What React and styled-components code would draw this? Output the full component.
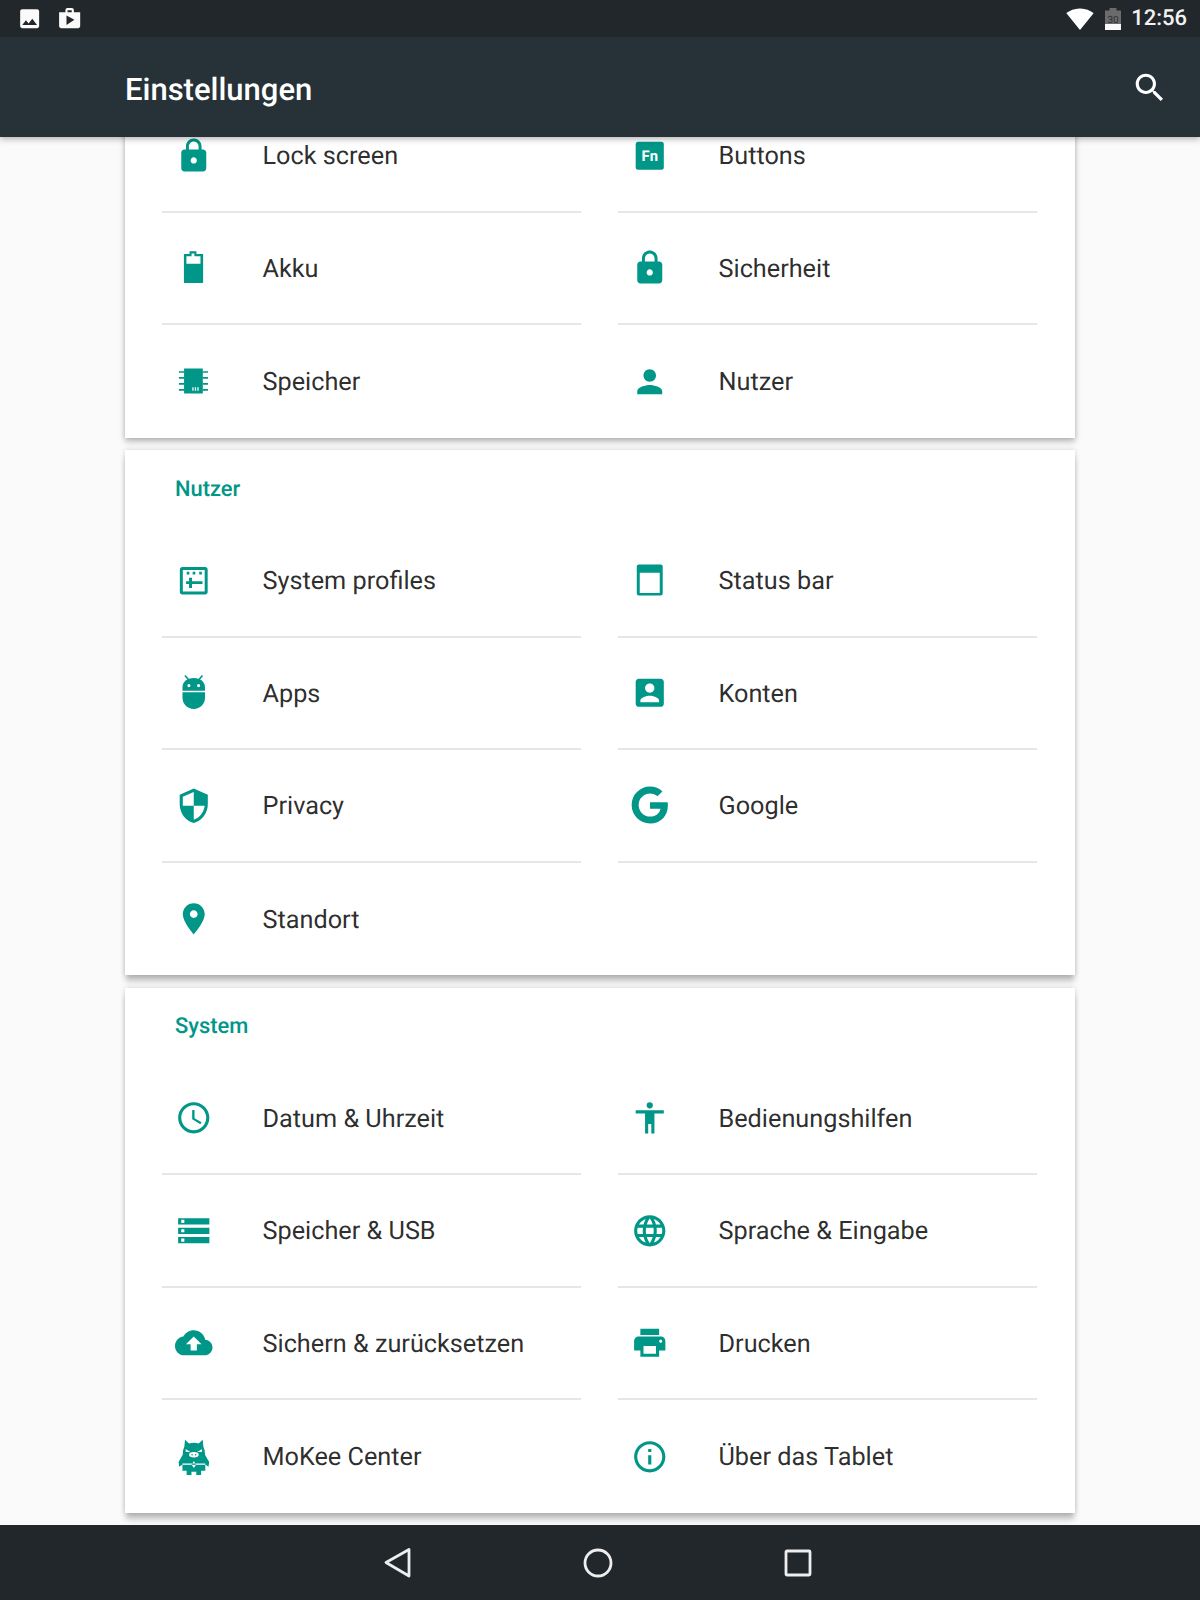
import React from 'react';
import styled, { createGlobalStyle } from 'styled-components';
import { FaGoogle } from 'react-icons/fa';

const Global = createGlobalStyle`
  html, body { margin: 0; padding: 0; background: #fafafa; }
  * { box-sizing: border-box; }
`;

const Screen = styled.div`
  width: 1200px;
  height: 1600px;
  display: flex;
  flex-direction: column;
  overflow: hidden;
  font-family: Roboto, "Noto Sans", sans-serif;
  text-rendering: geometricPrecision;
  background: #fafafa;
`;

const StatusBar = styled.div`
  height: 37px;
  flex: none;
  background: #21272b;
  display: flex;
  align-items: center;
  justify-content: space-between;
  padding: 0 13px 0 17px;
  position: relative;
  z-index: 3;
`;
const StatusGroup = styled.div`
  display: flex;
  align-items: center;
  gap: ${p => p.$gap}px;
`;
const Clock = styled.span`
  color: #f2f2f2;
  font-size: 22px;
  font-weight: 500;
  line-height: 37px;
`;
const BatteryText = styled.text`
  font-family: Roboto, sans-serif;
  font-size: 10px;
  fill: #2b2f33;
`;

const AppBar = styled.header`
  height: 100px;
  flex: none;
  background: #263238;
  display: flex;
  align-items: center;
  justify-content: space-between;
  padding: 4px 32px 0 125px;
  box-shadow: 0 2px 6px rgba(0, 0, 0, 0.3);
  position: relative;
  z-index: 2;
`;
const Title = styled.h1`
  margin: 0;
  color: #fff;
  font-size: 31px;
  font-weight: 500;
`;
const SearchButton = styled.span`
  display: flex;
  margin-top: -2px;
`;

const Scroll = styled.main`
  flex: 1;
  min-height: 0;
  overflow: hidden;
  padding: 0 125px;
  display: flex;
  flex-direction: column;
  gap: 12.5px;
`;
const Card = styled.section`
  flex: none;
  background: #fff;
  padding: 0 37px;
  margin-top: ${p => p.$offset || 0}px;
  box-shadow: ${p => p.$deep
    ? '0 7px 6px -1px rgba(0,0,0,.24), 0 0 5px rgba(0,0,0,.16)'
    : '0 4px 6px rgba(0,0,0,.22), 0 0 5px rgba(0,0,0,.16)'};
`;
const CardHead = styled.h2`
  margin: 0 0 0 13px;
  height: 75px;
  padding-top: 3px;
  display: flex;
  align-items: center;
  font-size: 21.9px;
  font-weight: 500;
  color: #009688;
`;
const Grid = styled.div`
  display: grid;
  grid-template-columns: 419px 419px;
  column-gap: 37px;
`;
const Row = styled.div`
  height: 112.5px;
  display: flex;
  align-items: center;
  padding-left: 13px;
  border-bottom: ${p => (p.$last ? 'none' : '2px solid #e6e6e6')};
`;
const IconBox = styled.span`
  width: 37.5px;
  height: 37.5px;
  flex: none;
  display: flex;
  align-items: center;
  justify-content: center;
  color: #009688;
`;
const Label = styled.span`
  margin-left: 50px;
  padding-top: 3px;
  font-size: 25.25px;
  color: rgba(0, 0, 0, 0.84);
`;
const FnText = styled.text`
  font-family: Roboto, sans-serif;
  font-size: 9.5px;
  font-weight: 700;
  fill: #fff;
`;

const NavBar = styled.nav`
  height: 75px;
  flex: none;
  background: #21272b;
  display: flex;
  align-items: center;
  justify-content: center;
  padding-right: 4px;
  position: relative;
  z-index: 2;
`;
const NavSlot = styled.span`
  width: 200px;
  display: flex;
  justify-content: center;
`;

const Svg = ({ size = 37.5, fill = 'currentColor', children, view = '0 0 24 24' }) => (
  <svg width={size} height={size} viewBox={view} fill={fill} fillRule="evenodd">{children}</svg>
);

const P = ({ d }) => <path d={d} />;

const LOCK = 'M18 8h-1V6c0-2.76-2.24-5-5-5S7 3.24 7 6v2H6c-1.1 0-2 .9-2 2v10c0 1.1.9 2 2 2h12c1.1 0 2-.9 2-2V10c0-1.1-.9-2-2-2zm-6 9c-1.1 0-2-.9-2-2s.9-2 2-2 2 .9 2 2-.9 2-2 2zm3.1-9H8.9V6c0-1.71 1.39-3.1 3.1-3.1 1.71 0 3.1 1.39 3.1 3.1v2z';

const icons = {
  lock: <P d={LOCK} />,
  fn: (
    <>
      <rect x="3" y="3" width="18" height="18" rx="1.6" />
      <FnText x="12" y="15.4" textAnchor="middle">Fn</FnText>
    </>
  ),
  battery: (
    <g transform="translate(-.5 0)">
      <path d="M6.2 3.2h3.6V1.4h4.400v1.800h4.100c.1 0 .2.1.2.2V21.400c0 .2-.1.3-.3.3H6.500c-.2 0-.3-.1-.3-.3V3.400c0-.1.1-.2.2-.2zM7.800 9.400h9V4.700h-3.900V2.900h-1.800v1.800H7.800z" />
    </g>
  ),
  memory: (
    <g transform="translate(-.5 0)">
      <path d="M6.300 3.800c0-.2.1-.3.3-.3H18c.2 0 .3.1.3.3v15.400c0 .2-.1.3-.3.3H6.600c-.2 0-.3-.1-.3-.3zM11.600 15.500v2.300h.8v-2.300zM13.200 15.500v2.300h.8v-2.300zM14.800 15.500v2.300h.8v-2.300z" />
      <path d="M3 5.200h3.400v1.100H3zM3 9h3.400v1.100H3zM3 12.800h3.400v1.100H3zM3 16.600h3.400v1.100H3zM18.200 5.200h3.400v1.100h-3.400zM18.200 9h3.400v1.100h-3.400zM18.200 12.800h3.400v1.100h-3.400zM18.200 16.600h3.400v1.100h-3.400z" />
    </g>
  ),
  person: <P d="M12 12c2.210 0 4-1.790 4-4s-1.790-4-4-4-4 1.790-4 4 1.790 4 4 4zm0 2c-2.670 0-8 1.340-8 4v2h16v-2c0-2.660-5.330-4-8-4z" />,
  profiles: (
    <>
      <path d="M4.700 3.200h14.600c.9 0 1.600.7 1.600 1.600v14.400c0 .9-.7 1.600-1.600 1.600H4.700c-.9 0-1.600-.7-1.600-1.600V4.800c0-.9.7-1.600 1.600-1.600zm.3 1.900v13.800h14V5.100z" />
      <path d="M9 10h1.900v2.300h6.700v1.800h-6.700v2.500H9v-2.500H7.100v-1.800H9zM7.500 6.300h1.700V8H7.500zM11.300 6.300H13V8h-1.700zM15.500 6.300h1.700V8h-1.700z" />
    </>
  ),
  statusbar: <P d="M5 1.600h14c.7 0 1.300.6 1.300 1.300v17.200c0 .7-.6 1.300-1.300 1.300H5c-.7 0-1.300-.6-1.300-1.300V2.900c0-.7.6-1.300 1.300-1.300zM5.600 6.900v12.900h12.800V6.900z" />,
  android: (
    <g transform="translate(-.5 0)">
      <path d="M5.300 10.700V8.500c0-3.600 3-6 7.200-6s7.200 2.400 7.200 6v2.200zM9.400 6.400a1 1 0 1 0 0 2 1 1 0 0 0 0-2zm6.200 0a1 1 0 1 0 0 2 1 1 0 0 0 0-2z" />
      <path d="M6.500 1.300l.8-.6 2.200 2.500-.8.7zM18.500 1.300l-.8-.6-2.200 2.500.8.7z" />
      <path d="M5.300 11.700h14.400v3.500c0 4-3.200 7.200-7.200 7.200s-7.200-3.200-7.200-7.200z" />
    </g>
  ),
  shield: <P d="M12 1L3 5v6c0 5.550 3.840 10.740 9 12 5.160-1.260 9-6.450 9-12V5l-9-4zm0 10.990h7c-.53 4.120-3.280 7.790-7 8.940V12H5V6.300l7-3.110v8.800z" />,
  pin: <P d="M12 2C8.130 2 5 5.130 5 9c0 5.250 7 13 7 13s7-7.750 7-13c0-3.870-3.130-7-7-7zm0 9.500c-1.380 0-2.500-1.120-2.500-2.500s1.120-2.500 2.500-2.500 2.500 1.120 2.500 2.500-1.120 2.500-2.500 2.500z" />,
  account: <P d="M3 5v14c0 1.100.89 2 2 2h14c1.100 0 2-.9 2-2V5c0-1.100-.9-2-2-2H5c-1.110 0-2 .9-2 2zm12 4c0 1.660-1.340 3-3 3s-3-1.340-3-3 1.340-3 3-3 3 1.340 3 3zm-9 8c0-2 4-3.100 6-3.100s6 1.100 6 3.100v1H6v-1z" />,
  clock: <P d="M11.990 2C6.470 2 2 6.480 2 12s4.470 10 9.990 10C17.520 22 22 17.520 22 12S17.520 2 11.990 2zM12 20c-4.420 0-8-3.580-8-8s3.580-8 8-8 8 3.580 8 8-3.580 8-8 8zm.5-13H11v6l5.250 3.150.75-1.230-4.500-2.670z" />,
  access: <P d="M12 2a2 2 0 1 1 0 4 2 2 0 0 1 0-4zm9 5.200v2h-6V22h-2v-6h-2v6H9V9.200H3v-2z" />,
  storage: <P d="M2 20h20v-4H2v4zm2-3h2v2H4v-2zM2 4v4h20V4H2zm4 3H4V5h2v2zm-4 7h20v-4H2v4zm2-3h2v2H4v-2z" />,
  globe: <P d="M11.990 2C6.470 2 2 6.480 2 12s4.470 10 9.990 10C17.520 22 22 17.520 22 12S17.520 2 11.990 2zm6.930 6h-2.950c-.32-1.250-.78-2.450-1.380-3.560 1.840.63 3.370 1.910 4.330 3.560zM12 4.040c.83 1.200 1.480 2.530 1.910 3.960h-3.820c.43-1.430 1.080-2.760 1.910-3.960zM4.260 14C4.100 13.360 4 12.690 4 12s.1-1.360.26-2h3.380c-.08.66-.14 1.320-.14 2 0 .68.06 1.340.14 2H4.260zm.82 2h2.950c.32 1.250.78 2.450 1.380 3.560-1.840-.63-3.370-1.900-4.330-3.560zm2.950-8H5.080c.96-1.660 2.490-2.930 4.330-3.560C8.810 5.550 8.350 6.750 8.030 8zM12 19.960c-.83-1.200-1.480-2.530-1.910-3.960h3.820c-.43 1.430-1.080 2.760-1.910 3.960zM14.340 14H9.660c-.09-.66-.16-1.320-.16-2 0-.68.07-1.350.16-2h4.680c.09.65.16 1.320.16 2 0 .68-.07 1.340-.16 2zm.25 5.560c.6-1.110 1.060-2.310 1.380-3.560h2.950c-.96 1.650-2.490 2.930-4.330 3.560zM16.360 14c.08-.66.14-1.320.14-2 0-.68-.06-1.340-.14-2h3.380c.16.64.26 1.310.26 2s-.1 1.360-.26 2h-3.380z" />,
  cloud: <P d="M19.350 10.040C18.670 6.590 15.640 4 12 4 9.110 4 6.600 5.640 5.350 8.040 2.340 8.360 0 10.910 0 14c0 3.310 2.690 6 6 6h13c2.760 0 5-2.240 5-5 0-2.640-2.050-4.780-4.650-4.960zM14 13v4h-4v-4H7l5-5 5 5h-3z" />,
  print: <P d="M19 8H5c-1.660 0-3 1.340-3 3v6h4v4h12v-4h4v-6c0-1.660-1.340-3-3-3zm-3 11H8v-5h8v5zm3-7c-.55 0-1-.45-1-1s.45-1 1-1 1 .45 1 1-.45 1-1 1zm-1-9H6v4h12V3z" />,
  info: <P d="M11 7h2v2h-2zm0 4h2v6h-2zm1-9C6.480 2 2 6.480 2 12s4.480 10 10 10 10-4.480 10-10S17.520 2 12 2zm0 18c-4.410 0-8-3.590-8-8s3.590-8 8-8 8 3.590 8 8-3.590 8-8 8z" />,
  mokee: (
    <g transform="translate(-.8 -.6) scale(1.030)">
      <path d="M7 1.600L9.500 4Q12.500 3.200 15.500 4L18 1.600l.4 4.400Q19.500 8 19.400 11L22 15.500l-.4 3-2-1.500v4H17v3h-3v-2.500h-3V24H8v-3H5.400v-4l-2 1.500-.4-3L5.600 11Q5.500 8 6.600 6z" />
      <path fill="#fff" d="M7.400 7.400l3.200 2-3.200-.3zM17.600 7.400l-3.200 2 3.200-.3z" />
      <ellipse cx="12.500" cy="11" rx="3" ry="1.700" fill="#fff" />
      <circle cx="11.400" cy="11" r=".5" />
      <circle cx="13.600" cy="11" r=".5" />
      <path fill="#fff" d="M5.400 16.500h14.200v.7H5.400zM12.500 14.800l1.400 2.400-1.400 2-1.400-2z" />
    </g>
  ),
};

const Item = ({ icon, label, last }) => (
  <Row $last={last}>
    <IconBox>
      {icon === 'google' ? <FaGoogle size={38} /> : <Svg>{icons[icon]}</Svg>}
    </IconBox>
    <Label>{label}</Label>
  </Row>
);

const groups = [
  {
    offset: -37,
    items: [
      ['lock', 'Lock screen'], ['fn', 'Buttons'],
      ['battery', 'Akku'], ['lock', 'Sicherheit'],
      ['memory', 'Speicher'], ['person', 'Nutzer'],
    ],
    lastFrom: 4,
  },
  {
    title: 'Nutzer',
    deep: true,
    items: [
      ['profiles', 'System profiles'], ['statusbar', 'Status bar'],
      ['android', 'Apps'], ['account', 'Konten'],
      ['shield', 'Privacy'], ['google', 'Google'],
      ['pin', 'Standort'],
    ],
    lastFrom: 6,
  },
  {
    title: 'System',
    deep: true,
    items: [
      ['clock', 'Datum & Uhrzeit'], ['access', 'Bedienungshilfen'],
      ['storage', 'Speicher & USB'], ['globe', 'Sprache & Eingabe'],
      ['cloud', 'Sichern & zurücksetzen'], ['print', 'Drucken'],
      ['mokee', 'MoKee Center'], ['info', 'Über das Tablet'],
    ],
    lastFrom: 6,
  },
];

export default function App() {
  return (
    <Screen>
      <Global />
      <StatusBar>
        <StatusGroup $gap={14.7}>
          <Svg size={25.3} fill="#fafafa"><path d="M21 19V5c0-1.100-.9-2-2-2H5c-1.100 0-2 .9-2 2v14c0 1.100.9 2 2 2h14c1.100 0 2-.9 2-2zM8.500 13.500l2.500 3.010L14.500 12l4.500 6H5l3.500-4.500z" /></Svg>
          <Svg size={25.3} fill="#fafafa"><path d="M16 6V4c0-1.110-.89-2-2-2h-4c-1.110 0-2 .89-2 2v2H2v13c0 1.110.89 2 2 2h16c1.110 0 2-.89 2-2V6h-6zm-6-2h4v2h-4V4zM9 18V9l7.500 4L9 18z" /></Svg>
        </StatusGroup>
        <StatusGroup $gap={10.500}>
          <Svg size={28} fill="#fff"><path d="M12.010 21.490L23.640 7c-.45-.34-4.930-4-11.640-4C5.280 3 .81 6.660.36 7l11.630 14.490.01.01.01-.01z" /></Svg>
          <svg width="16" height="22" viewBox="0 0 16 22">
            <path fill="#6b6b6b" d="M0 2.500h4.500V0h7v2.500H16V16H0z" />
            <path fill="#fafafa" d="M0 16h16v6H0z" />
            <BatteryText x="8" y="15" textAnchor="middle">30</BatteryText>
          </svg>
          <Clock>12:56</Clock>
        </StatusGroup>
      </StatusBar>
      <AppBar>
        <Title>Einstellungen</Title>
        <SearchButton>
          <Svg fill="#fff"><path d="M15.500 14h-.79l-.28-.27C15.410 12.590 16 11.110 16 9.500 16 5.910 13.090 3 9.500 3S3 5.910 3 9.500 5.910 16 9.500 16c1.610 0 3.090-.59 4.230-1.570l.27.28v.79l5 4.990L20.490 19l-4.990-5zm-6 0C7.010 14 5 11.990 5 9.500S7.010 5 9.500 5 14 7.010 14 9.500 11.990 14 9.500 14z" /></Svg>
        </SearchButton>
      </AppBar>
      <Scroll>
        {groups.map((g, i) => (
          <Card key={i} $offset={g.offset} $deep={g.deep}>
            {g.title && <CardHead>{g.title}</CardHead>}
            <Grid>
              {g.items.map(([icon, label], j) => (
                <Item key={j} icon={icon} label={label} last={j >= g.lastFrom} />
              ))}
            </Grid>
          </Card>
        ))}
      </Scroll>
      <NavBar>
        <NavSlot>
          <svg width="30" height="32" viewBox="0 0 30 32" fill="none" stroke="#eee" strokeWidth="2.800" strokeLinejoin="round"><path d="M26 2.500V29L3 15.500z" /></svg>
        </NavSlot>
        <NavSlot>
          <svg width="32" height="32" viewBox="0 0 32 32" fill="none" stroke="#eee" strokeWidth="2.800"><circle cx="16" cy="16" r="13" /></svg>
        </NavSlot>
        <NavSlot>
          <svg width="28" height="28" viewBox="0 0 28 28" fill="none" stroke="#eee" strokeWidth="2.800" strokeLinejoin="round"><rect x="2" y="2" width="24" height="24" rx="1" /></svg>
        </NavSlot>
      </NavBar>
    </Screen>
  );
}
